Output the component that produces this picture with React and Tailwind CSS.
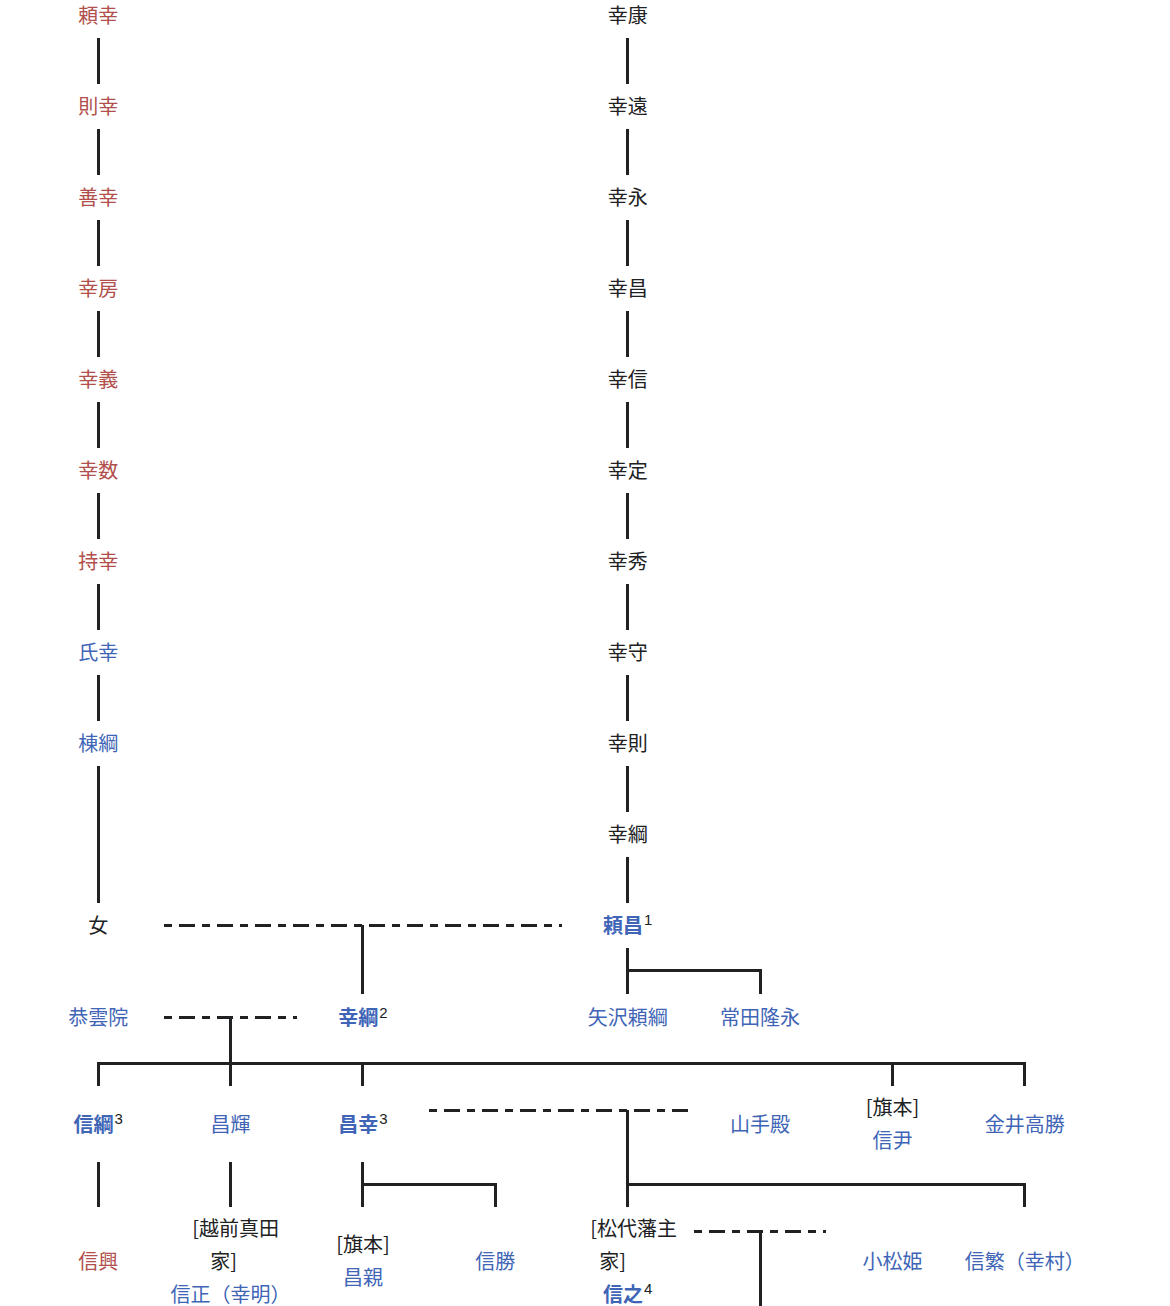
import React from 'react';

// 真田氏 系図
const INK = 'text-[#202122]';
const BLUE = 'text-[#4065b6]';
const RED = 'text-[#b04f4b]';
const LINE = 'bg-[#202122]';
const DASH =
  'bg-[image:repeating-linear-gradient(90deg,#202122_0_8px,transparent_8px_15px,#202122_15px_31px,transparent_31px_38px)]';

const Row = ({ h, children }) => (
  <div className={`grid grid-cols-[repeat(16,66.2px)] grid-rows-1 ${h}`}>{children}</div>
);

const Name = ({ span, className = '', children }) => (
  <div
    className={`${span} row-start-1 flex flex-col items-center justify-center pb-[2px] text-center leading-[33px] whitespace-nowrap ${className}`}
  >
    {children}
  </div>
);

// vertical line at the centre of a column
const V = ({ span, line = 'flex-1' }) => (
  <div className={`${span} row-start-1 flex flex-col items-center`}>
    <div className={`w-[3px] ${LINE} ${line}`} />
  </div>
);

// horizontal line between column centres
const H = ({ span, line = 'self-center', dashed = false }) => (
  <div className={`${span} row-start-1 flex`}>
    <div className={`h-[3px] flex-1 ${dashed ? DASH : `${LINE} mx-[-1.5px]`} ${line}`} />
  </div>
);

const Sup = ({ children }) => (
  <sup className="text-[15px] font-normal text-[#202122] ml-[1px] top-[-0.5em] font-['Liberation_Sans',sans-serif]">{children}</sup>
);

const top = [
  [['頼幸', RED], '幸康'],
  [['則幸', RED], '幸遠'],
  [['善幸', RED], '幸永'],
  [['幸房', RED], '幸昌'],
  [['幸義', RED], '幸信'],
  [['幸数', RED], '幸定'],
  [['持幸', RED], '幸秀'],
  [['氏幸', BLUE], '幸守'],
  [['棟綱', BLUE], '幸則'],
  [null, '幸綱'],
];

export default function App() {
  return (
    <div className="min-h-screen bg-white overflow-hidden font-['Noto_Sans_CJK_JP','Noto_Sans',sans-serif] text-[20px]">
      <div className="pl-[32px] mt-[-7.5px]">
        {top.map(([l, r], i) => (
          <React.Fragment key={i}>
            <Row h="h-[45px]">
              {l ? (
                <Name span="col-start-1 col-end-3" className={l[1]}>{l[0]}</Name>
              ) : (
                <V span="col-start-1 col-end-3" />
              )}
              <Name span="col-start-9 col-end-11" className={INK}>{r}</Name>
            </Row>
            <Row h="h-[46px]">
              <V span="col-start-1 col-end-3" />
              <V span="col-start-9 col-end-11" />
            </Row>
          </React.Fragment>
        ))}

        {/* 女 ─ 頼昌 */}
        <Row h="h-[45px]">
          <Name span="col-start-1 col-end-3" className={INK}>女</Name>
          <H span="col-start-3 col-end-9" dashed />
          <V span="col-start-5 col-end-7" line="mt-[22.5px] flex-1" />
          <Name span="col-start-9 col-end-11" className={`${BLUE} font-bold`}>
            <span>頼昌<Sup>1</Sup></span>
          </Name>
        </Row>
        <Row h="h-[46.5px]">
          <V span="col-start-5 col-end-7" />
          <V span="col-start-9 col-end-11" />
          <H span="col-start-10 col-end-12" />
          <V span="col-start-11 col-end-13" line="mt-[23px] flex-1" />
        </Row>

        {/* 恭雲院 ─ 幸綱 */}
        <Row h="h-[47px]">
          <Name span="col-start-1 col-end-3" className={BLUE}>恭雲院</Name>
          <H span="col-start-3 col-end-5" dashed />
          <V span="col-start-3 col-end-5" line="mt-[23.5px] flex-1" />
          <Name span="col-start-5 col-end-7" className={`${BLUE} font-bold`}>
            <span>幸綱<Sup>2</Sup></span>
          </Name>
          <Name span="col-start-9 col-end-11" className={BLUE}>矢沢頼綱</Name>
          <Name span="col-start-11 col-end-13" className={BLUE}>常田隆永</Name>
        </Row>
        <Row h="h-[45px]">
          <V span="col-start-3 col-end-5" />
          <H span="col-start-2 col-end-16" />
          <V span="col-start-1 col-end-3" line="mt-[22.5px] flex-1" />
          <V span="col-start-5 col-end-7" line="mt-[22.5px] flex-1" />
          <V span="col-start-13 col-end-15" line="mt-[22.5px] flex-1" />
          <V span="col-start-15 col-end-17" line="mt-[22.5px] flex-1" />
        </Row>

        {/* 信綱 昌輝 昌幸 ... */}
        <Row h="h-[76px]">
          <Name span="col-start-1 col-end-3" className={`${BLUE} font-bold`}>
            <span>信綱<Sup>3</Sup></span>
          </Name>
          <Name span="col-start-3 col-end-5" className={BLUE}>昌輝</Name>
          <Name span="col-start-5 col-end-7" className={`${BLUE} font-bold`}>
            <span>昌幸<Sup>3</Sup></span>
          </Name>
          <H span="col-start-7 col-end-11" dashed line="self-start mt-[22.5px]" />
          <V span="col-start-9 col-end-11" line="mt-[24px] flex-1" />
          <Name span="col-start-11 col-end-13" className={BLUE}>山手殿</Name>
          <Name span="col-start-13 col-end-15">
            <span className={INK}>[旗本]</span>
            <span className={BLUE}>信尹</span>
          </Name>
          <Name span="col-start-15 col-end-17" className={BLUE}>金井高勝</Name>
        </Row>
        <Row h="h-[45px]">
          <V span="col-start-1 col-end-3" />
          <V span="col-start-3 col-end-5" />
          <V span="col-start-5 col-end-7" />
          <H span="col-start-6 col-end-8" />
          <V span="col-start-7 col-end-9" line="mt-[22.5px] flex-1" />
          <V span="col-start-9 col-end-11" />
          <H span="col-start-10 col-end-16" />
          <V span="col-start-15 col-end-17" line="mt-[22.5px] flex-1" />
        </Row>

        {/* 信興 ... 信繁 */}
        <Row h="h-[110px]">
          <Name span="col-start-1 col-end-3" className={`${RED} self-start h-[108px]`}>信興</Name>
          <Name span="col-start-3 col-end-5" className="self-start h-[108px]">
            <span className={`${INK} translate-x-[5px]`}>[越前真田</span>
            <span className={`${INK} translate-x-[-7px]`}>家]</span>
            <span className={BLUE}>信正（幸明）</span>
          </Name>
          <Name span="col-start-5 col-end-7" className="self-start h-[108px]">
            <span className={INK}>[旗本]</span>
            <span className={BLUE}>昌親</span>
          </Name>
          <Name span="col-start-7 col-end-9" className={`${BLUE} self-start h-[108px]`}>信勝</Name>
          <Name span="col-start-9 col-end-11" className="self-start h-[108px]">
            <span className={`${INK} translate-x-[6px]`}>[松代藩主</span>
            <span className={`${INK} translate-x-[-15px]`}>家]</span>
            <span className={`${BLUE} font-bold`}>信之<Sup>4</Sup></span>
          </Name>
          <H span="col-start-11 col-end-13" dashed line="self-start mt-[22.5px]" />
          <V span="col-start-11 col-end-13" line="mt-[24px] flex-1" />
          <Name span="col-start-13 col-end-15" className={`${BLUE} self-start h-[108px]`}>小松姫</Name>
          <Name span="col-start-15 col-end-17" className={`${BLUE} self-start h-[108px]`}>信繁（幸村）</Name>
        </Row>
      </div>
    </div>
  );
}
